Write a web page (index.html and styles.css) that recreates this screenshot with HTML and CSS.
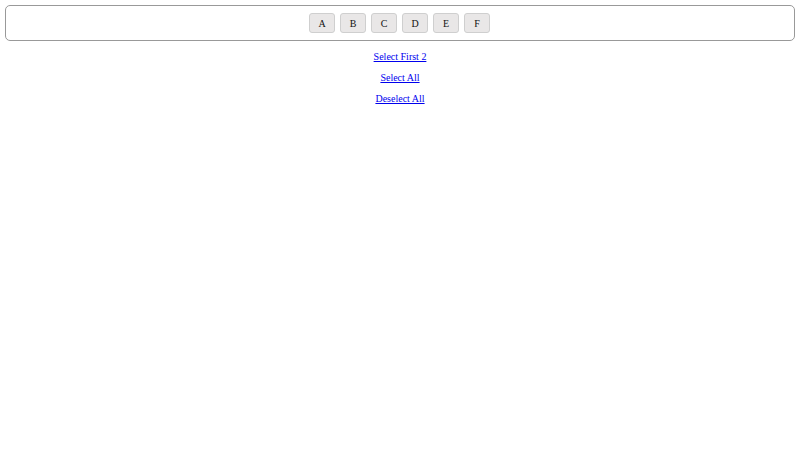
FILE: index.html
```html
<!DOCTYPE html>
<html>
<head>
<meta charset="utf-8">
<link rel="stylesheet" href="styles.css">
</head>
<body>
<div class="bar">
  <button class="btn">A</button>
  <button class="btn">B</button>
  <button class="btn">C</button>
  <button class="btn">D</button>
  <button class="btn">E</button>
  <button class="btn">F</button>
</div>
<div class="links">
  <a href="#" class="link">Select First 2</a>
  <a href="#" class="link">Select All</a>
  <a href="#" class="link">Deselect All</a>
</div>
</body>
</html>
```
FILE: styles.css
```css
html, body {
  margin: 0;
  padding: 0;
  background: #fff;
  font-family: "Liberation Serif", "Times New Roman", serif;
}
.bar {
  margin: 5px;
  border: 1px solid #999;
  border-radius: 5px;
  height: 34px;
  display: flex;
  justify-content: center;
  align-items: center;
  gap: 5px;
  padding-right: 1px;
}
.btn {
  width: 26px;
  height: 20px;
  padding: 0;
  border: 1px solid #cfcfcf;
  border-radius: 3px;
  background: #e9e7e7;
  font-family: "Liberation Serif", "Times New Roman", serif;
  font-size: 10px;
  color: #111;
}
.links {
  display: flex;
  flex-direction: column;
  align-items: center;
  padding-top: 0;
}
.link {
  font-size: 10px;
  line-height: 21px;
  color: #0000ee;
}
```
